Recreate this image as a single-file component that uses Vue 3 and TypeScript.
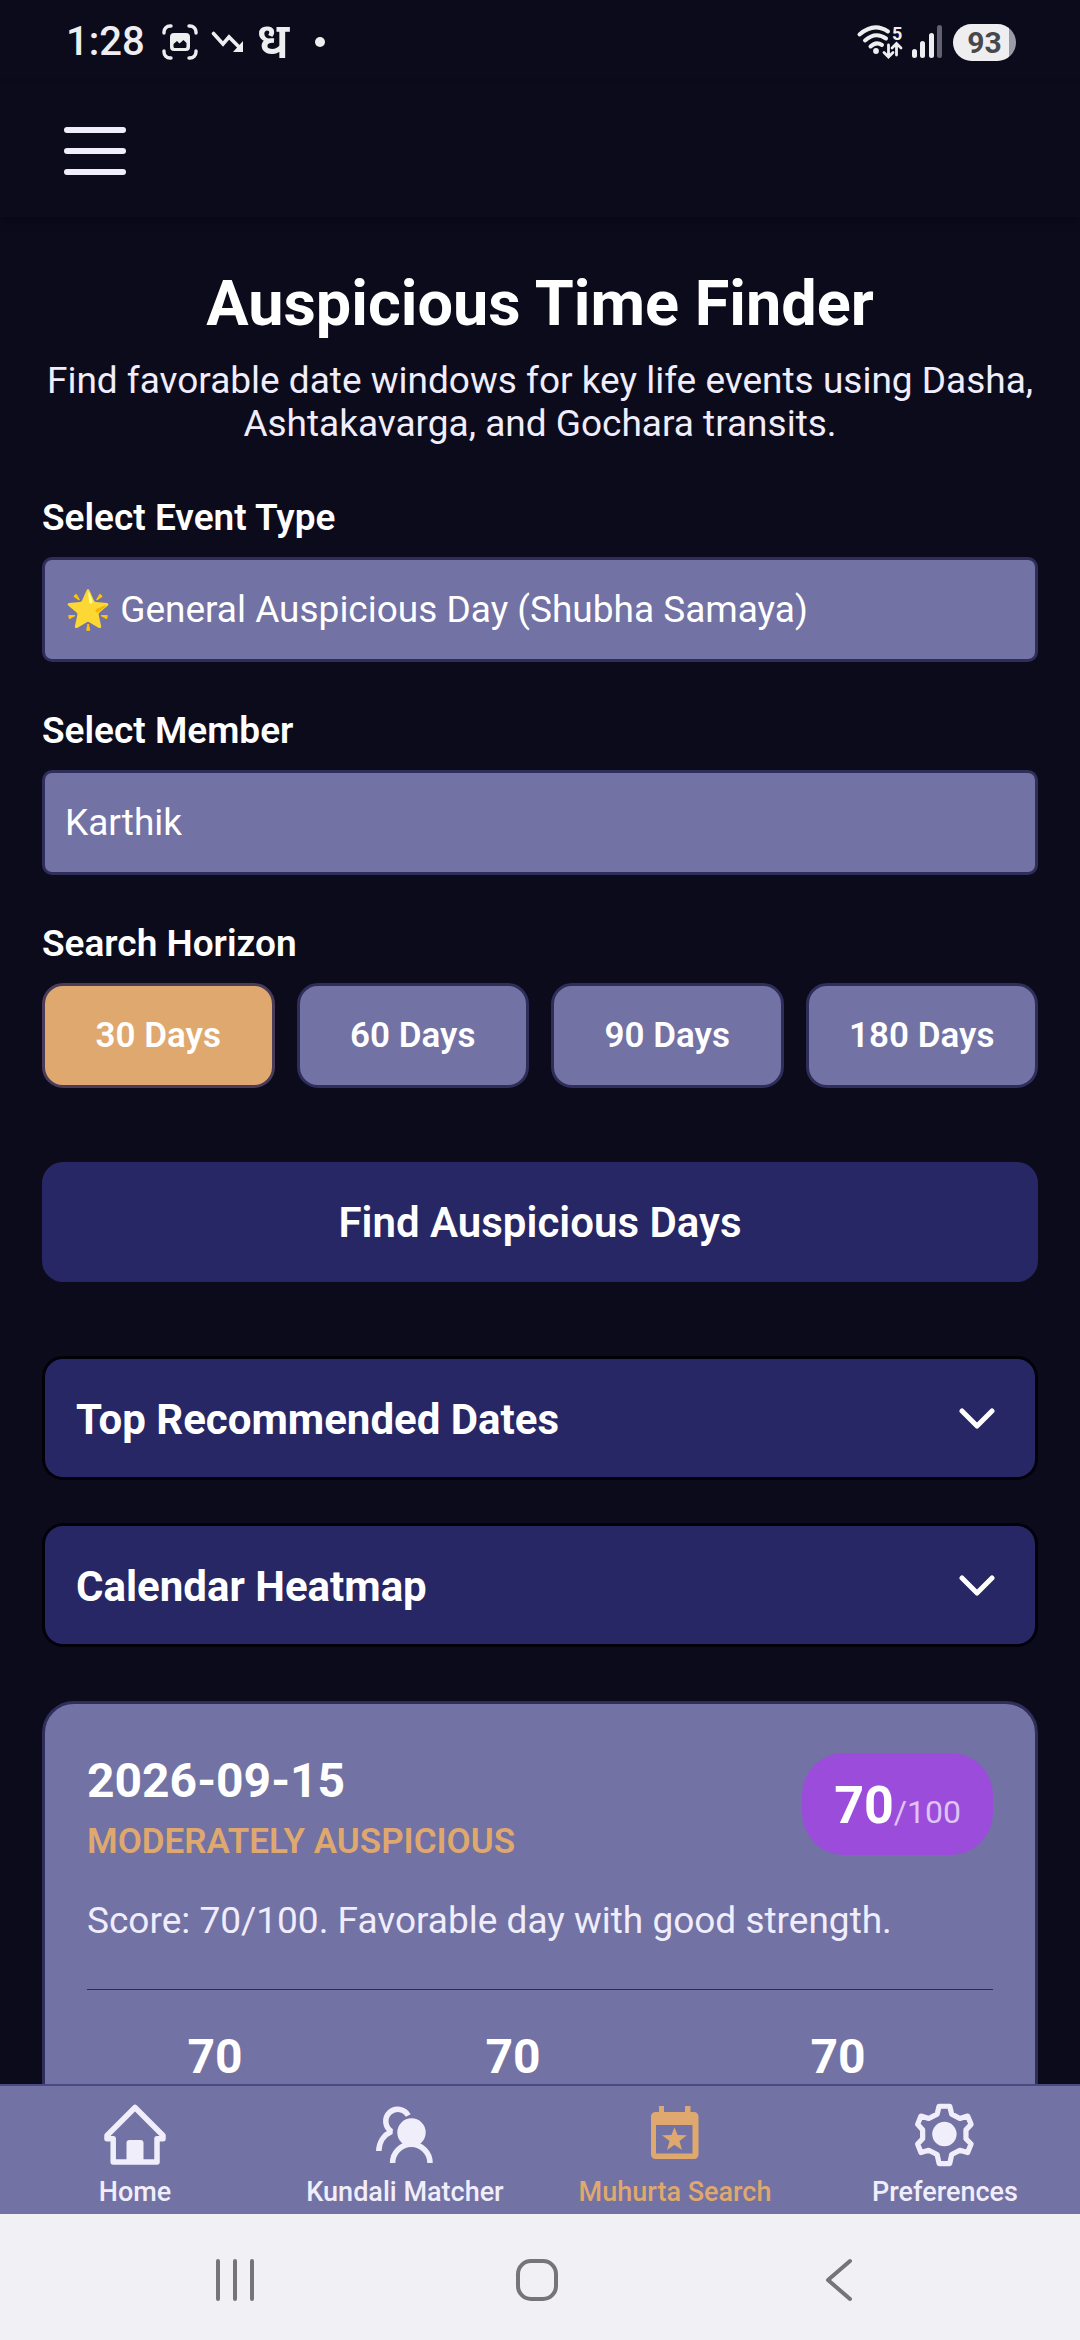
<script setup lang="ts">
import { ref } from 'vue'

const eventTypes = ['🌟 General Auspicious Day (Shubha Samaya)']
const members = ['Karthik']
const horizons = [30, 60, 90, 180]
const panels = ['Top Recommended Dates', 'Calendar Heatmap']
const factorScores = [70, 70, 70]

const eventType = ref(eventTypes[0])
const member = ref(members[0])
const horizon = ref(30)
</script>

<template>
  <div class="app">
    <div class="status">
      <div class="status-left">
        <span class="clock">1:28</span>
        <svg class="shot" viewBox="0 0 36 36" width="36" height="36" aria-hidden="true">
          <g fill="none" stroke="#eeeef0" stroke-width="3.4" stroke-linecap="round">
            <path d="M2 9V8a6 6 0 0 1 6-6h1M27 2h1a6 6 0 0 1 6 6v1M34 27v1a6 6 0 0 1-6 6h-1M9 34H8a6 6 0 0 1-6-6v-1" />
          </g>
          <path
            fill="#eeeef0"
            fill-rule="evenodd"
            d="M12 9h12a4 4 0 0 1 4 4v10a4 4 0 0 1-4 4H12a4 4 0 0 1-4-4V13a4 4 0 0 1 4-4zM11.500 20v2.500a1.500 1.500 0 0 0 1.500 1.500h10a1.500 1.500 0 0 0 1.500-1.500V19l-3-3-4 3.500-2.500-2.500z"
          />
        </svg>
        <svg class="trend" viewBox="0 0 34 22" width="34" height="22" aria-hidden="true">
          <path d="M2.500 2.500L12 13l6-7 11 11" fill="none" stroke="#eeeef0" stroke-width="3.600" stroke-linecap="round" />
          <path d="M32 10v11H22z" fill="#eeeef0" />
        </svg>
        <span class="glyph">ध</span>
        <span class="dot"></span>
      </div>
      <div class="status-right">
        <svg class="wifi" viewBox="0 0 46 36" width="46" height="36" aria-hidden="true">
          <g fill="none" stroke="#eeeef0" stroke-width="4" stroke-linecap="round">
            <path d="M2.500 10.500Q17 -2 31 7.500" />
            <path d="M8 16.500Q18.500 7 29 14.500" />
            <path d="M13.500 22.500Q19 17 25 21" />
          </g>
          <circle cx="19" cy="27" r="2.900" fill="#eeeef0" />
          <text x="35" y="16" font-size="18" font-weight="700" fill="#eeeef0">5</text>
          <path
            d="M31.500 21v11M27 28.500l4.500 4.500 4.500-4.500M39.500 31V20M35 24l4.500-4.500 4.500 4.500"
            fill="none"
            stroke="#eeeef0"
            stroke-width="2.800"
            stroke-linecap="round"
          />
        </svg>
        <svg class="signal" viewBox="0 0 30 34" width="30" height="34" aria-hidden="true">
          <g fill="#eeeef0">
            <rect x="0" y="24" width="5" height="9" rx="2.500" />
            <rect x="8" y="16" width="5" height="17" rx="2.500" />
            <rect x="17" y="8" width="5" height="25" rx="2.500" />
          </g>
          <rect x="25" y="0" width="5" height="33" rx="2.500" fill="#62616f" />
        </svg>
        <span class="battery">93</span>
      </div>
    </div>

    <header class="topbar">
      <button class="menu" type="button" aria-label="Open menu">
        <span></span>
        <span></span>
        <span></span>
      </button>
    </header>

    <main class="content">
      <h1>Auspicious Time Finder</h1>
      <p class="intro">Find favorable date windows for key life events using Dasha, Ashtakavarga, and Gochara transits.</p>

      <div class="field">
        <label for="event-type">Select Event Type</label>
        <select id="event-type" v-model="eventType">
          <option v-for="e in eventTypes" :key="e">{{ e }}</option>
        </select>
      </div>

      <div class="field">
        <label for="member">Select Member</label>
        <select id="member" v-model="member">
          <option v-for="m in members" :key="m">{{ m }}</option>
        </select>
      </div>

      <div class="field">
        <span id="horizon-label" class="label">Search Horizon</span>
        <div class="horizons" role="group" aria-labelledby="horizon-label">
          <button
            v-for="d in horizons"
            :key="d"
            type="button"
            :class="{ active: horizon === d }"
            :aria-pressed="horizon === d"
            @click="horizon = d"
          >
            {{ d }} Days
          </button>
        </div>
      </div>

      <button class="find" type="button">Find Auspicious Days</button>

      <div class="panels">
        <button v-for="p in panels" :key="p" class="panel" type="button" aria-expanded="false">
          <span>{{ p }}</span>
          <svg viewBox="0 0 36 22" width="36" height="22" aria-hidden="true">
            <path d="M3 3l15 15L33 3" fill="none" stroke="#fff" stroke-width="5" stroke-linecap="round" stroke-linejoin="round" />
          </svg>
        </button>
      </div>

      <article class="card">
        <div class="card-head">
          <div>
            <h2>2026-09-15</h2>
            <p class="rating">MODERATELY AUSPICIOUS</p>
          </div>
          <p class="badge"><b>70</b><span>/100</span></p>
        </div>
        <p class="summary">Score: 70/100. Favorable day with good strength.</p>
        <div class="factors">
          <span v-for="(s, i) in factorScores" :key="i">{{ s }}</span>
        </div>
      </article>
    </main>

    <nav class="tabs">
      <a href="#home">
        <svg viewBox="0 0 64 64" width="64" height="64" aria-hidden="true">
          <path
            d="M32 4.500L4 32.500V35.700H10.200V59H54V35.700H60V32.500Z"
            fill="none"
            stroke="currentColor"
            stroke-width="5.500"
            stroke-linejoin="round"
          />
          <rect x="23.500" y="37" width="17" height="24" rx="3" fill="currentColor" />
        </svg>
        Home
      </a>
      <a href="#kundali">
        <svg viewBox="0 0 64 64" width="64" height="64" aria-hidden="true">
          <g fill="none" stroke="currentColor" stroke-width="5.500">
            <path d="M35.300 12.500A12 12 0 1 0 18.500 28.500C10.500 32 6 39.500 5.800 48" stroke-linejoin="bevel" />
            <path d="M19.600 60A18.700 18.700 0 0 1 57 60" />
          </g>
          <circle cx="38.500" cy="29.500" r="14.200" fill="currentColor" />
        </svg>
        Kundali Matcher
      </a>
      <a href="#muhurta" class="current" aria-current="page">
        <svg viewBox="0 0 64 64" width="64" height="64" aria-hidden="true">
          <path
            fill="currentColor"
            fill-rule="evenodd"
            d="M16 3h5v6h21V3h5.500v6H51a4.500 4.500 0 0 1 4.500 4.500v38A4.500 4.500 0 0 1 51 56H12.500A4.500 4.500 0 0 1 8 51.500v-38A4.500 4.500 0 0 1 12.500 9H16zM13 22v28.500h36.500V22z"
          />
          <path
            fill="currentColor"
            d="M31.500 24.300L34.600 32 44 32.300 36.500 37.900 39 47 31.500 41.700 24 47 26.500 37.900 19 32.300 28.400 32z"
          />
        </svg>
        Muhurta Search
      </a>
      <a href="#preferences">
        <svg viewBox="0 -1 64 65" width="64" height="64" aria-hidden="true">
          <path
            d="M26 2.300H36.800L38.800 10.300 47.100 14.700 55 12.300 58.500 20.700 53.300 26.300V35.300L58.500 40.700 55 49.300 47.100 47 38.800 51.300 36.800 60.500H26L24 51.300 15.500 47 7.600 49.300 4.200 40.700 9.300 35.300V26.300L4.200 20.700 7.600 12.300 15.500 14.700 24 10.300Z"
            fill="none"
            stroke="currentColor"
            stroke-width="5.300"
            stroke-linejoin="round"
          />
          <circle cx="31.400" cy="30.500" r="12.400" fill="currentColor" />
        </svg>
        Preferences
      </a>
    </nav>

    <div class="sysbar">
      <button type="button" aria-label="Recent apps">
        <svg viewBox="0 0 44 44" width="44" height="44" aria-hidden="true">
          <path d="M5 3v38M22 3v38M39 3v38" />
        </svg>
      </button>
      <button type="button" aria-label="Home screen">
        <svg viewBox="0 0 44 44" width="44" height="44" aria-hidden="true">
          <rect x="3" y="3" width="38" height="38" rx="13" />
        </svg>
      </button>
      <button type="button" aria-label="Back">
        <svg viewBox="0 0 44 44" width="44" height="44" aria-hidden="true">
          <path d="M33 3L11 22l22 19" />
        </svg>
      </button>
    </div>
  </div>
</template>

<style>
body {
  margin: 0;
  background: #0c0b1c;
}
</style>

<style scoped>
.app {
  display: flex;
  flex-direction: column;
  height: 100vh;
  overflow: hidden;
  background: #0c0b1c;
  color: #fff;
  font-family: Roboto, "Noto Sans", sans-serif;
}

h1,
h2,
p {
  margin: 0;
}

button,
select {
  box-sizing: border-box;
  margin: 0;
  border: 0;
  padding: 0;
  background: none;
  color: inherit;
  font-family: inherit;
}

svg {
  display: block;
  flex: none;
}

.status {
  flex: none;
  display: flex;
  justify-content: space-between;
  align-items: center;
  height: 84px;
  padding: 0 64px 0 66px;
  color: #eeeef0;
}

.status-left,
.status-right {
  display: flex;
  align-items: center;
}

.clock {
  font-size: 40px;
  font-weight: 500;
  line-height: 48px;
}

.shot {
  margin-left: 17px;
}

.trend {
  margin-left: 13px;
}

.glyph {
  margin-left: 12px;
  font-size: 49px;
  font-weight: 600;
  line-height: 48px;
}

.dot {
  width: 10px;
  height: 10px;
  margin-left: 26px;
  border-radius: 50%;
  background: #eeeef0;
}

.wifi {
  overflow: visible;
}

.signal {
  margin-left: 9px;
}

.battery {
  width: 63px;
  margin-left: 11px;
  border-radius: 19px;
  background: linear-gradient(to right, #eeeef0 56px, #9a9aa8 56px);
  color: #48484a;
  font-size: 30px;
  font-weight: 700;
  line-height: 37px;
  text-align: center;
}

.topbar {
  flex: none;
  display: flex;
  align-items: center;
  height: 133px;
  padding: 0 64px;
  box-shadow: 0 4px 8px rgba(4, 3, 16, 0.4);
}

.menu {
  display: flex;
  flex-direction: column;
  gap: 15px;
  width: 62px;
}

.menu span {
  height: 6px;
  border-radius: 3px;
  background: #f1eefc;
}

.content {
  flex: 1;
  min-height: 0;
  display: flex;
  flex-direction: column;
  padding: 50px 42px 0;
  overflow: hidden;
}

.content > * {
  flex: none;
}

h1 {
  font-size: 63px;
  font-weight: 700;
  line-height: 74px;
  text-align: center;
}

.intro {
  margin-top: 18px;
  color: #f0edfc;
  font-size: 37px;
  line-height: 43px;
  text-align: center;
}

.field {
  display: flex;
  flex-direction: column;
  gap: 18px;
  margin-top: 47px;
}

.intro + .field {
  margin-top: 51px;
}

label,
.label {
  font-size: 37px;
  font-weight: 600;
  line-height: 43px;
}

select {
  appearance: none;
  width: 100%;
  height: 105px;
  padding: 0 20px;
  border: 3px solid #2f2d59;
  border-radius: 10px;
  background: #7372a4;
  font-size: 37px;
}

.horizons {
  display: grid;
  grid-template-columns: repeat(4, 1fr);
  gap: 22px;
}

.horizons button {
  height: 105px;
  border: 3px solid #2f2d59;
  border-radius: 21px;
  background: #7372a4;
  font-size: 35px;
  font-weight: 600;
}

.horizons .active {
  border-color: #4a3b58;
  background: #dfa86e;
}

.find {
  height: 120px;
  margin-top: 74px;
  border-radius: 21px;
  background: #282765;
  font-size: 42px;
  font-weight: 600;
}

.panels {
  display: flex;
  flex-direction: column;
  gap: 43px;
  margin-top: 74px;
}

.panel {
  display: flex;
  justify-content: space-between;
  align-items: center;
  height: 124px;
  padding: 2px 40px 0 31px;
  border: 3px solid #020109;
  border-radius: 21px;
  background: #282765;
  font-size: 42px;
  font-weight: 700;
}

.card {
  margin-top: 54px;
  padding: 49px 42px 42px;
  border: 3px solid #2f2d59;
  border-radius: 32px;
  background: #7372a4;
}

.card-head {
  display: flex;
  justify-content: space-between;
  align-items: flex-start;
}

h2 {
  font-size: 48px;
  font-weight: 700;
  line-height: 56px;
}

.rating {
  margin-top: 12px;
  color: #dfa86e;
  font-size: 35px;
  font-weight: 600;
  line-height: 41px;
}

.badge {
  display: flex;
  align-items: baseline;
  height: 102px;
  padding: 0 32px;
  border-radius: 42px;
  background: #9b4cdb;
  white-space: nowrap;
}

.badge b {
  font-size: 52px;
  font-weight: 700;
  line-height: 106px;
}

.badge span {
  color: #dfc3f5;
  font-size: 32px;
  line-height: 38px;
}

.summary {
  margin-top: 37px;
  color: #f0edfc;
  font-size: 37px;
  line-height: 43px;
}

.factors {
  display: grid;
  grid-template-columns: 256fr 340fr 310fr;
  margin-top: 47px;
  padding-top: 40px;
  border-top: 1px solid #2a2966;
  font-size: 48px;
  font-weight: 700;
  line-height: 54px;
  text-align: center;
}

.tabs {
  flex: none;
  display: grid;
  grid-template-columns: repeat(4, 1fr);
  padding: 17px 0 6px;
  border-top: 2px solid #4a4983;
  background: #7372a4;
}

.tabs a {
  display: flex;
  flex-direction: column;
  align-items: center;
  gap: 9px;
  color: #f1eefc;
  font-size: 27px;
  font-weight: 500;
  line-height: 32px;
  text-decoration: none;
}

.tabs .current {
  color: #dfa86e;
}

.sysbar {
  flex: none;
  display: flex;
  justify-content: center;
  align-items: center;
  gap: 258px;
  height: 126px;
  padding: 6px 6px 0 0;
  box-sizing: border-box;
  background: #f1f1f5;
}

.sysbar svg {
  fill: none;
  stroke: #757579;
  stroke-width: 4px;
  stroke-linecap: round;
  stroke-linejoin: round;
}
</style>
